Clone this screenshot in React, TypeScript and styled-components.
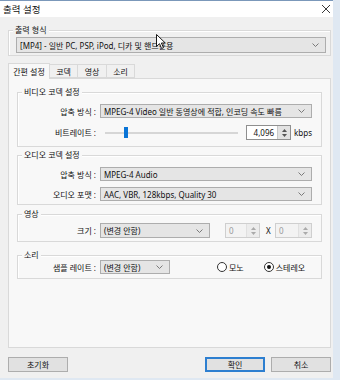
import React from "react";
import styled, { createGlobalStyle } from "styled-components";

const Global = createGlobalStyle`
  html, body { margin: 0; padding: 0; }
  body {
    background: #dfe8f2;
    font-family: "Noto Sans", "Noto Sans CJK KR", sans-serif;
    font-size: 8px;
    color: #111;
    width: 340px;
    height: 380px;
    overflow: hidden;
  }
`;

const Window = styled.div`
  position: relative;
  width: 333px;
  height: 378px;
  box-sizing: border-box;
  background: #f0f0f0;
  border-top: 1px solid #7b98ba;
  display: flex;
  flex-direction: column;
`;

const TitleBar = styled.div`
  height: 16px;
  background: #ffffff;
  display: flex;
  align-items: center;
  justify-content: space-between;
  padding: 0 2px 0 3px;
  font-size: 9.5px;
  color: #111;
`;

const Content = styled.div`
  display: flex;
  flex-direction: column;
  padding: 0 2px 0 8px;
`;

const Group = styled.div<{ $mt: number; $h: number; $pt: number }>`
  position: relative;
  box-sizing: border-box;
  margin-top: ${(p) => p.$mt}px;
  height: ${(p) => p.$h}px;
  border: 1px solid #d9d9d9;
  box-shadow: inset 1px 1px 0 #ffffff;
  padding: ${(p) => p.$pt}px 9px 0 0;
  display: flex;
  flex-direction: column;
  gap: 6px;
`;

const Legend = styled.span<{ $bg: string }>`
  position: absolute;
  top: -7px;
  left: 4px;
  padding: 0 2px;
  background: ${(p) => p.$bg};
  line-height: 12px;
  color: #111;
`;

const TopGroupInner = styled.div`
  padding-left: 7px;
  padding-right: 4px;
`;

const ComboBox = styled.div<{ $w?: number; $h?: number }>`
  box-sizing: border-box;
  height: ${(p) => p.$h ?? 14}px;
  width: ${(p) => (p.$w ? `${p.$w}px` : "auto")};
  flex: ${(p) => (p.$w ? "none" : "1")};
  background: #e5e5e5;
  border: 1px solid #adadad;
  display: flex;
  align-items: center;
  justify-content: space-between;
  padding: 0 6px 0 3px;
  white-space: nowrap;
  overflow: hidden;
  color: #111;
`;

const Chevron = () => (
  <svg width="7" height="4" viewBox="0 0 7 4">
    <polyline points="0.5,0.5 3.5,3.5 6.5,0.5" fill="none" stroke="#6d6d6d" strokeWidth="0.9" />
  </svg>
);

const Tabs = styled.div`
  display: flex;
  margin-top: 8px;
  height: 14px;
  align-items: flex-end;
`;

const Tab = styled.div<{ $w: number; $active?: boolean }>`
  box-sizing: border-box;
  width: ${(p) => p.$w}px;
  height: ${(p) => (p.$active ? 16 : 14)}px;
  margin-bottom: ${(p) => (p.$active ? -1 : 0)}px;
  background: ${(p) => (p.$active ? "#f8f8f8" : "#f0f0f0")};
  border: 1px solid #d9d9d9;
  border-bottom: ${(p) => (p.$active ? "none" : "1px solid #d9d9d9")};
  border-left: ${(p) => (p.$active ? "1px solid #d9d9d9" : "none")};
  display: flex;
  align-items: center;
  justify-content: center;
  position: relative;
  z-index: ${(p) => (p.$active ? 1 : 0)};
`;

const Panel = styled.div`
  box-sizing: border-box;
  width: 323px;
  height: 270px;
  background: #f8f8f8;
  border: 1px solid #d9d9d9;
  padding: 13px 8px 0 8px;
  display: flex;
  flex-direction: column;
`;

const Row = styled.div<{ $h?: number }>`
  display: flex;
  align-items: center;
  height: ${(p) => p.$h ?? 14}px;
`;

const Label = styled.div`
  width: 82px;
  box-sizing: border-box;
  text-align: right;
  padding-right: 4px;
  white-space: nowrap;
  flex: none;
`;

const SliderTrack = styled.div`
  position: relative;
  margin-left: 5px;
  width: 141px;
  height: 2px;
  background: #e3e3e3;
  border: 1px solid #d6d6d6;
  box-sizing: border-box;
`;

const SliderThumb = styled.div`
  position: absolute;
  left: 18px;
  top: -6px;
  width: 4px;
  height: 11px;
  background: #0a74d6;
`;

const SpinBox = styled.div<{ $w: number; $disabled?: boolean; $ml: number }>`
  box-sizing: border-box;
  margin-left: ${(p) => p.$ml}px;
  width: ${(p) => p.$w}px;
  height: 15px;
  background: ${(p) => (p.$disabled ? "#f3f3f3" : "#ffffff")};
  border: 1px solid ${(p) => (p.$disabled ? "#cfcfcf" : "#8f8f8f")};
  display: flex;
  align-items: stretch;
  color: ${(p) => (p.$disabled ? "#9a9a9a" : "#111")};
`;

const SpinText = styled.div<{ $right?: boolean }>`
  flex: 1;
  display: flex;
  align-items: center;
  justify-content: ${(p) => (p.$right ? "flex-end" : "flex-start")};
  padding: 0 3px;
`;

const SpinButtons = styled.div<{ $disabled?: boolean }>`
  width: 12px;
  background: ${(p) => (p.$disabled ? "#ececec" : "#e2e2e2")};
  border-left: 1px solid ${(p) => (p.$disabled ? "#e0e0e0" : "#c8c8c8")};
  display: flex;
  flex-direction: column;
  align-items: center;
  justify-content: center;
  gap: 2px;
`;

const Arrow = ({ up, color }: { up?: boolean; color: string }) => (
  <svg width="5" height="3" viewBox="0 0 5 3">
    <polygon points={up ? "0,3 2.5,0 5,3" : "0,0 2.5,3 5,0"} fill={color} />
  </svg>
);

const Unit = styled.span<{ $ml: number }>`
  margin-left: ${(p) => p.$ml}px;
  white-space: nowrap;
`;

const Radio = styled.div<{ $ml: number }>`
  margin-left: ${(p) => p.$ml}px;
  display: flex;
  align-items: center;
  gap: 2px;
  white-space: nowrap;
`;

const RadioCircle = styled.span<{ $checked?: boolean }>`
  box-sizing: border-box;
  width: 10px;
  height: 10px;
  border-radius: 50%;
  border: 1px solid #333;
  background: #fff;
  display: flex;
  align-items: center;
  justify-content: center;
  &::after {
    content: "";
    width: 4px;
    height: 4px;
    border-radius: 50%;
    background: ${(p) => (p.$checked ? "#111" : "transparent")};
  }
`;

const ButtonRow = styled.div`
  display: flex;
  margin-top: 9px;
  height: 15px;
`;

const Button = styled.div<{ $primary?: boolean; $ml?: number }>`
  box-sizing: border-box;
  width: 60px;
  height: 15px;
  margin-left: ${(p) => p.$ml ?? 0}px;
  background: #e1e1e1;
  border: ${(p) => (p.$primary ? "2px solid #2d7fd0" : "1px solid #adadad")};
  display: flex;
  align-items: center;
  justify-content: center;
`;

const Spacer = styled.div`
  flex: 1;
`;

const Cursor = styled.svg`
  position: absolute;
  left: 156px;
  top: 33px;
`;

const CloseIcon = () => (
  <svg width="10" height="10" viewBox="0 0 10 10">
    <path d="M1 1 L9 9 M9 1 L1 9" stroke="#222" strokeWidth="0.9" />
  </svg>
);

const XMark = styled.span`
  margin-left: 6px;
  width: 5px;
`;

export default function App() {
  const PANEL = "#f8f8f8";
  return (
    <>
      <Global />
      <Window>
        <TitleBar>
          <span>출력 설정</span>
          <CloseIcon />
        </TitleBar>
        <Content>
          <Group $mt={13} $h={26} $pt={6} style={{ paddingRight: 0 }}>
            <Legend $bg="#f0f0f0">출력 형식</Legend>
            <TopGroupInner>
              <ComboBox $h={16}>
                <span>[MP4] - 일반 PC, PSP, iPod, 디카 및 핸드폰용</span>
                <Chevron />
              </ComboBox>
            </TopGroupInner>
          </Group>

          <Tabs>
            <Tab $w={42} $active>간편 설정</Tab>
            <Tab $w={28}>코덱</Tab>
            <Tab $w={29}>영상</Tab>
            <Tab $w={28}>소리</Tab>
          </Tabs>

          <Panel>
            <Group $mt={0} $h={55} $pt={11}>
              <Legend $bg={PANEL}>비디오 코덱 설정</Legend>
              <Row>
                <Label>압축 방식 :</Label>
                <ComboBox>
                  <span>MPEG-4 Video 일반 동영상에 적합, 인코딩 속도 빠름</span>
                  <Chevron />
                </ComboBox>
              </Row>
              <Row $h={15} style={{ marginTop: 1 }}>
                <Label>비트레이트 :</Label>
                <SliderTrack>
                  <SliderThumb />
                </SliderTrack>
                <SpinBox $w={48} $ml={8}>
                  <SpinText $right>4,096</SpinText>
                  <SpinButtons>
                    <Arrow up color="#555" />
                    <Arrow color="#555" />
                  </SpinButtons>
                </SpinBox>
                <Unit $ml={3}>kbps</Unit>
              </Row>
            </Group>

            <Group $mt={8} $h={50} $pt={11}>
              <Legend $bg={PANEL}>오디오 코덱 설정</Legend>
              <Row>
                <Label>압축 방식 :</Label>
                <ComboBox>
                  <span>MPEG-4 Audio</span>
                  <Chevron />
                </ComboBox>
              </Row>
              <Row>
                <Label>오디오 포맷 :</Label>
                <ComboBox>
                  <span>AAC, VBR, 128kbps, Quality 30</span>
                  <Chevron />
                </ComboBox>
              </Row>
            </Group>

            <Group $mt={9} $h={28} $pt={8}>
              <Legend $bg={PANEL}>영상</Legend>
              <Row $h={15}>
                <Label>크기 :</Label>
                <ComboBox $w={110} $h={15}>
                  <span>(변경 안함)</span>
                  <Chevron />
                </ComboBox>
                <SpinBox $w={35} $ml={15} $disabled>
                  <SpinText>0</SpinText>
                  <SpinButtons $disabled>
                    <Arrow up color="#aaa" />
                    <Arrow color="#aaa" />
                  </SpinButtons>
                </SpinBox>
                <XMark>X</XMark>
                <SpinBox $w={37} $ml={4} $disabled>
                  <SpinText>0</SpinText>
                  <SpinButtons $disabled>
                    <Arrow up color="#aaa" />
                    <Arrow color="#aaa" />
                  </SpinButtons>
                </SpinBox>
              </Row>
            </Group>

            <Group $mt={13} $h={24} $pt={4}>
              <Legend $bg={PANEL}>소리</Legend>
              <Row>
                <Label>샘플 레이트 :</Label>
                <ComboBox $w={70}>
                  <span>(변경 안함)</span>
                  <Chevron />
                </ComboBox>
                <Radio $ml={47}>
                  <RadioCircle />
                  <span>모노</span>
                </Radio>
                <Radio $ml={20}>
                  <RadioCircle $checked />
                  <span>스테레오</span>
                </Radio>
              </Row>
            </Group>
          </Panel>

          <ButtonRow>
            <Button>초기화</Button>
            <Spacer />
            <Button $primary>확인</Button>
            <Button $ml={6}>취소</Button>
          </ButtonRow>
        </Content>
        <Cursor width="11" height="16" viewBox="0 0 11 16">
          <path
            d="M0.5 0.5 L0.5 12.5 L3.5 9.7 L5.6 14.5 L7.5 13.7 L5.4 9 L9.3 9 Z"
            fill="#ffffff"
            stroke="#000"
            strokeWidth="0.9"
            strokeLinejoin="round"
          />
        </Cursor>
      </Window>
    </>
  );
}
